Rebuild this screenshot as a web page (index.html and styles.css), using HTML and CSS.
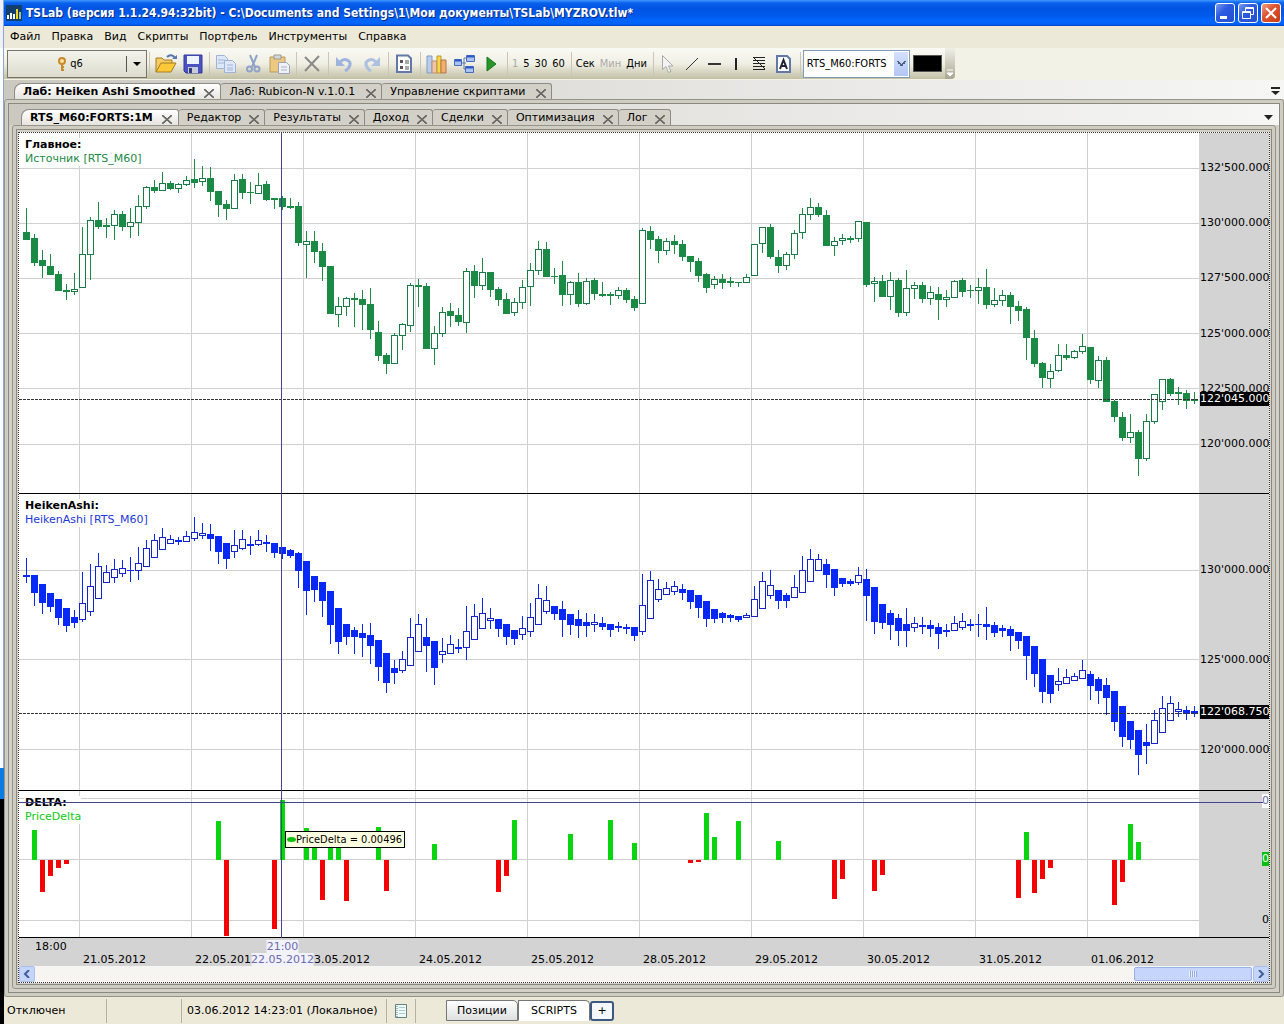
FILE: index.html
```html
<!DOCTYPE html>
<html lang="ru">
<head>
<meta charset="utf-8">
<title>TSLab</title>
<link rel="stylesheet" href="styles.css">
</head>
<body>
<div class="desktop-edge"></div>
<div class="window">
  <header class="titlebar">
    <svg class="app-icon" width="16" height="16" viewBox="0 0 16 16"><rect width="16" height="16" fill="#123f6b"/><path d="M1 10h2v4H1zM4 8h2v6H4zM7 9h2v5H7z" fill="#fff"/><path d="M10 4h2v10h-2z" fill="#f2d21c"/><path d="M13 7h2v7h-2z" fill="#9cc6a0"/></svg>
    <h1 class="caption">TSLab (версия 1.1.24.94:32bit) - C:\Documents and Settings\1\Мои документы\TSLab\MYZROV.tlw*</h1>
    <div class="window-buttons">
      <button class="wbtn" aria-label="Свернуть"><svg width="18" height="18"><rect x="4" y="12" width="7" height="3" fill="#fff"/></svg></button>
      <button class="wbtn" aria-label="Восстановить"><svg width="18" height="18" fill="none" stroke="#fff"><path d="M6.500 7V3.500h8v7H12M6 4.500h9"/><path d="M3.500 7.500h8v7h-8zM3 8.500h9"/></svg></button>
      <button class="wbtn close" aria-label="Закрыть"><svg width="18" height="18"><path d="M4 4l10 10M14 4L4 14" stroke="#fff" stroke-width="2"/></svg></button>
    </div>
  </header>
  <nav class="menubar">
    <button>Файл</button><button>Правка</button><button>Вид</button><button>Скрипты</button><button>Портфель</button><button>Инструменты</button><button>Справка</button>
  </nav>
  <div class="toolbar-area">
    <div class="toolbar">
      <button class="split"><span class="split-main"><svg width="10" height="16" viewBox="0 0 10 16"><circle cx="5" cy="5" r="3" fill="#fbe3a0" stroke="#c98a2c" stroke-width="2"/><path d="M5 8v7M5 11h2M5 14h2" stroke="#c98a2c" stroke-width="2"/></svg>q6</span><span class="split-arrow"></span></button>
      <span class="group">
        <button aria-label="Открыть"><svg width="24" height="22" viewBox="0 0 24 22"><path d="M2 19V5h6l2 2h8v4" fill="#f3cd63" stroke="#a67b1d"/><path d="M2 19l5-9h15l-5 9z" fill="#fbc938" stroke="#a67b1d"/><path d="M13 4c3-3 6-2 8 1" fill="none" stroke="#5877b0" stroke-width="2"/><path d="M18 6h5V2z" fill="#5877b0"/></svg></button>
        <button aria-label="Сохранить"><svg width="24" height="22" viewBox="0 0 24 22"><path d="M3 2h18v18H5l-2-2z" fill="#4b52c4" stroke="#333a96"/><path d="M6 3h12v8H6z" fill="#eef3fc"/><path d="M7 14h10v6H7z" fill="#c8cbd8"/><path d="M8 15h3v5H8z" fill="#333a80"/></svg></button>
      </span>
      <span class="group">
        <button aria-label="Копировать"><svg width="24" height="22" viewBox="0 0 24 22" fill="#dde7f8" stroke="#9fb3d9"><path d="M2.500 2.500h8l3 3v10h-11zM4 7h7M4 10h7"/><path d="M10.500 7.500h8l3 3v9h-11zM13 12h6M13 15h6M13 17h6"/></svg></button>
        <button aria-label="Вырезать"><svg width="24" height="22" viewBox="0 0 24 22" fill="none" stroke="#8fa3c8" stroke-width="2"><path d="M9 2l5 12M16 2l-5 12"/><circle cx="8.500" cy="16" r="2.500"/><circle cx="16" cy="16" r="2.500"/></svg></button>
        <button aria-label="Вставить"><svg width="24" height="22" viewBox="0 0 24 22"><path d="M2 4h15v15H2z" fill="#ecc97f" stroke="#b59b62"/><path d="M6 2h7v4H6z" fill="#d6d6d6" stroke="#999"/><path d="M10.500 9.500h8l3 3v8h-11z" fill="#eef1f8" stroke="#9ba4b8"/><path d="M13 14h6M13 17h6" stroke="#aab3c6"/></svg></button>
      </span>
      <span class="group solo"><button aria-label="Удалить"><svg width="22" height="22" viewBox="0 0 22 22"><path d="M4 4l14 14M18 3L4 18" stroke="#8a8a8a" stroke-width="2"/></svg></button></span>
      <span class="group">
        <button aria-label="Отменить"><svg width="24" height="22" viewBox="0 0 24 22"><path d="M7 9c5-5 11-1 10 3-1 3-3 5-5 6" fill="none" stroke="#9fb4dc" stroke-width="3"/><path d="M3 4v9h9z" fill="#9fb4dc"/></svg></button>
        <button aria-label="Повторить"><svg width="24" height="22" viewBox="0 0 24 22"><path d="M16 9C11 4 5 8 6 12c1 3 3 5 5 6" fill="none" stroke="#aebfdf" stroke-width="3"/><path d="M20 4v9h-9z" fill="#aebfdf"/></svg></button>
      </span>
      <span class="group solo"><button aria-label="Свойства"><svg width="22" height="22" viewBox="0 0 22 22"><path d="M4 2.500h11l3 3V19H4z" fill="#fff" stroke="#6079a8" stroke-width="2"/><path d="M7 7h3v3H7zM7 13h3v3H7z" fill="#555"/><path d="M12 8h4M12 10h4M12 14h4M12 16h4" stroke="#555"/></svg></button></span>
      <span class="group">
        <button aria-label="График"><svg width="24" height="22" viewBox="0 0 24 22" stroke-width="1"><path d="M2 3h5v17H2z" fill="#b9cdec" stroke="#8299c2"/><path d="M7 8h5v12H7z" fill="#f0c4a8" stroke="#b98d72"/><path d="M12 3h4v17h-4z" fill="#f7d74d" stroke="#bd982b"/><path d="M16 7h5v13h-5z" fill="#f2b06c" stroke="#b1764a"/></svg></button>
        <button aria-label="Схема"><svg width="24" height="22" viewBox="0 0 24 22"><path d="M9 10h5M12 5v11M12 5h3M12 16h3" stroke="#5d78b5" fill="none"/><g fill="#a9c4f3" stroke="#4a6cc0"><path d="M2.500 6.500h7v6h-7zM14.500 2.500h8v6h-8zM13.500 13.500h8v6h-8z"/></g><path d="M3 7.500h6M15 3.500h7M14 14.500h7" stroke="#3157c4" stroke-width="2"/></svg></button>
        <button aria-label="Запуск"><svg width="24" height="22" viewBox="0 0 24 22"><path d="M8 4l9 7-9 7z" fill="#27962a" stroke="#17761a"/></svg></button>
      </span>
      <span class="group words"><button disabled>1</button><button>5</button><button>30</button><button>60</button></span>
      <span class="group words"><button>Сек</button><button disabled>Мин</button><button>Дни</button></span>
      <span class="group tools">
        <button aria-label="Курсор"><svg width="23" height="22" viewBox="0 0 23 22"><path d="M5.500 2.500v14l3.500-3 2.500 6 2.500-1-2.500-5.500h4.500z" fill="#f3f3f3" stroke="#aaa"/></svg></button>
        <button aria-label="Линия"><svg width="23" height="22"><path d="M6 17L18 5" stroke="#333"/></svg></button>
        <button aria-label="Горизонталь"><svg width="23" height="22"><path d="M5 11h13" stroke="#333" stroke-width="2"/></svg></button>
        <button aria-label="Вертикаль"><svg width="23" height="22"><path d="M10 5v12" stroke="#222" stroke-width="2"/></svg></button>
        <button aria-label="Фибоначчи"><svg width="23" height="22"><path d="M4 4.500h12M4 7.500h12M4 10.500h12M4 13.500h12M4 16.500h12M5 5l11 11" stroke="#222"/></svg></button>
        <button aria-label="Текст"><svg width="23" height="22"><path d="M5 3h10l3 3v13H5z" fill="#fff" stroke="#6079a8" stroke-width="2"/><path d="M8 16l3.500-9L15 16M9 13h5" fill="none" stroke="#223" stroke-width="2"/></svg></button>
      </span>
      <span class="group last">
        <select class="instrument" aria-label="Инструмент"><option>RTS_M60:FORTS</option></select>
        <button class="swatch" aria-label="Цвет"></button>
      </span>
      <button class="overflow" aria-label="Ещё"><svg width="8" height="8"><path d="M1 1h6M1 4h6l-3 3z" stroke="#fff" fill="#fff"/></svg></button>
    </div>
  </div>

  <main class="workspace">
    <div class="tabstrip outer">
      <button class="tab active">Лаб: Heiken Ashi Smoothed<i class="x"></i></button><button class="tab">Лаб: Rubicon-N v.1.0.1<i class="x"></i></button><button class="tab">Управление скриптами<i class="x"></i></button>
      <button class="strip-menu" aria-label="Список вкладок"><svg width="9" height="8"><path d="M0 1h9" stroke="#222" stroke-width="2"/><path d="M0 4h9L4.500 8z" fill="#222"/></svg></button>
    </div>
    <div class="frame"><div class="frame-in">
      <div class="tabstrip inner">
        <button class="tab active">RTS_M60:FORTS:1M<i class="x"></i></button><button class="tab">Редактор<i class="x"></i></button><button class="tab">Результаты<i class="x"></i></button><button class="tab">Доход<i class="x"></i></button><button class="tab">Сделки<i class="x"></i></button><button class="tab">Оптимизация<i class="x"></i></button><button class="tab">Лог<i class="x"></i></button>
        <button class="strip-menu" aria-label="Список окон"><svg width="9" height="8"><path d="M0 2h9L4.500 7z" fill="#222"/></svg></button>
      </div>
      <div class="frame nested"><div class="frame-in">
        <div class="chart">
          <section class="pane price">
            <svg class="plot" id="source" viewBox="19 133 1180 360" preserveAspectRatio="none"></svg>
            <div class="scale" id="source-scale"></div>
            <div class="legend"><b>Главное:</b><span class="green">Источник [RTS_M60]</span></div>
          </section>
          <section class="pane heiken">
            <svg class="plot" id="heiken" viewBox="19 494 1180 296" preserveAspectRatio="none"></svg>
            <div class="scale" id="heiken-scale"></div>
            <div class="legend"><b>HeikenAshi:</b><span class="blue">HeikenAshi [RTS_M60]</span></div>
          </section>
          <section class="pane delta">
            <svg class="plot" id="delta" viewBox="19 791 1180 146" preserveAspectRatio="none"></svg>
            <div class="scale narrow" id="delta-scale"></div>
            <div class="legend"><b>DELTA:</b><span class="lime">PriceDelta</span></div>
            <div class="cross-h"></div>
            <div class="tip"><i></i>PriceDelta = 0.00496</div>
          </section>
          <div class="cross-v"></div>
          <div class="timeline">
            <div class="hours">18:00</div>
            <div class="days"><span>21.05.2012</span><span>22.05.2012</span><span>23.05.2012</span><span>24.05.2012</span><span>25.05.2012</span><span>28.05.2012</span><span>29.05.2012</span><span>30.05.2012</span><span>31.05.2012</span><span>01.06.2012</span></div>
            <div class="cursor-time"><span>21:00</span><span>22.05.2012</span></div>
          </div>
          <div class="scrollbar">
            <button aria-label="Влево"><svg width="8" height="8"><path d="M6 0L2 4l4 4" fill="none" stroke="#3f5f96" stroke-width="2"/></svg></button>
            <div class="track"><div class="thumb"></div></div>
            <button aria-label="Вправо"><svg width="8" height="8"><path d="M2 0l4 4-4 4" fill="none" stroke="#3f5f96" stroke-width="2"/></svg></button>
          </div>
        </div>
      </div></div>
    </div></div>
  </main>

  <footer class="status">
    <span class="cell state">Отключен</span><span class="cell blank"></span><span class="cell clock">03.06.2012 14:23:01 (Локальное)</span>
    <span class="cell note"><svg width="14" height="16"><path d="M1.500 1.500h11v13h-11z" fill="#eefaf8" stroke="#698080"/><path d="M3 1v14" stroke="#517c80" stroke-dasharray="1 1"/><path d="M5 4.500h6M5 7.500h6M5 10.500h6" stroke="#a9ccd0"/></svg></span>
    <div class="sheets"><button>Позиции</button><button class="current">SCRIPTS</button><button class="add">+</button></div>
  </footer>
</div>
<script src="chart.js"></script>
</body>
</html>
```
FILE: styles.css
```css
* { box-sizing: border-box; }
body {
  margin: 0;
  height: 100vh;
  min-height: 700px;
  display: grid;
  grid-template-columns: 4px minmax(0, 1fr);
  font: 11px/14px "DejaVu Sans", Verdana, sans-serif;
  color: #000;
  overflow: hidden;
}
button { font: inherit; color: inherit; border: 0; padding: 0; margin: 0; background: none; }
svg { display: block; flex: none; }
.desktop-edge {
  background: linear-gradient(90deg, transparent 3px, #8ba9d4 3px) top / 100% 75% no-repeat,
    linear-gradient(#f1eff6 0 48px, #fdfdfd 48px 75%, #0a7be0 75% 78%, #000 78%);
}
.window { display: flex; flex-direction: column; min-width: 0; background: #ece9d8; }

/* Title bar */
.titlebar {
  flex: none;
  height: 26px;
  display: flex;
  align-items: center;
  gap: 4px;
  padding: 0 3px 0 2px;
  background: linear-gradient(#3f98ff 0, #0a62ec 3px, #0054e3 8px, #0157e8 14px, #0066ff 21px, #0062f8 24px, #0044c4 26px);
}
.caption {
  flex: 1;
  margin: 0;
  font: bold 12px/20px "DejaVu Sans Condensed", "Trebuchet MS", sans-serif;
  color: #fff;
  text-shadow: 1px 1px 0 #0a2a80;
  white-space: nowrap;
}
.window-buttons { display: flex; gap: 3px; }
.wbtn {
  width: 20px;
  height: 20px;
  border: 1px solid #fff;
  border-radius: 3px;
  background: linear-gradient(135deg, #7b9cf0, #2c5be0 40%, #2350cf);
}
.wbtn.close { background: linear-gradient(135deg, #f0a48c, #de5530 40%, #c63d18); }

.menubar { flex: none; height: 22px; display: flex; align-items: center; gap: 11px; padding-left: 6px; }

/* Toolbar */
.toolbar-area { flex: none; height: 32px; background: #f2f2e6; display: flex; }
.toolbar {
  display: flex;
  align-items: center;
  height: 31px;
  padding-left: 3px;
  border-radius: 0 0 4px 0;
  background: linear-gradient(#fafaf5, #f0efe4 50%, #c2c0a4);
}
.split {
  width: 140px;
  height: 28px;
  display: flex;
  align-items: center;
  border: 1px solid #77756a;
  background: linear-gradient(#f4f3ec, #dddcce);
  font-family: "DejaVu Sans Condensed", sans-serif;
}
.split-main { flex: 1; display: flex; gap: 3px; align-items: center; justify-content: center; padding-left: 6px; }
.split-arrow { width: 20px; height: 16px; border-left: 1px solid #555; display: grid; place-items: center; }
.split-arrow::before { content: ""; border: 4px solid transparent; border-top-color: #000; border-bottom: 0; }
.group { display: flex; align-items: center; height: 24px; gap: 3px; padding: 0 2px 0 4px; border-left: 1px solid #c9c6b6; margin-left: 2px; }
.solo { padding: 0 3px 0 4px; }
.words { font-family: "DejaVu Sans Condensed", sans-serif; padding: 0 4px; gap: 5px; }
.words button:disabled { color: #aaa; }
.tools { gap: 0; padding: 0 5px 0 3px; }
.last { padding: 0 0 0 2px; gap: 3px; margin: 0; }
.instrument {
  appearance: none;
  width: 107px;
  height: 28px;
  border: 1px solid #7f9db9;
  border-radius: 0;
  padding: 0 0 0 3px;
  color: #000;
  font: 11px/14px "DejaVu Sans Condensed", sans-serif;
  background:
    linear-gradient(45deg, transparent 40%, #4d6185 40% 65%, transparent 65%) right 7px center / 5px 5px no-repeat,
    linear-gradient(-45deg, transparent 40%, #4d6185 40% 65%, transparent 65%) right 3px center / 5px 5px no-repeat,
    linear-gradient(#d5e0fc, #b3c6f3) right 1px center / 14px 24px no-repeat, #fff;
}
.swatch { width: 29px; height: 17px; background: #000; border: 1px solid #555; }
.overflow { align-self: stretch; display: grid; align-items: end; width: 10px; margin-left: 3px; padding: 0 1px 2px; background: linear-gradient(#f0efe8, #aaa893); border-radius: 0 0 4px 0; }

/* Tab strips */
.workspace { flex: 1; min-height: 0; display: flex; flex-direction: column; background: #d4d0c8; }
.tabstrip { flex: none; display: flex; align-items: end; background: linear-gradient(90deg, #cbc8c0, #e6e5e2 55%, #f6f6f5); white-space: nowrap; }
.tabstrip.outer { height: 19px; padding-left: 10px; }
.tabstrip.inner { height: 21px; padding-left: 12px; margin: 0 -3px; }
.tab {
  display: flex;
  align-items: center;
  gap: 8px;
  height: 16px;
  padding: 0 5px 0 8px;
  border: solid #8e8b84;
  border-width: 1px 1px 0 0;
  border-radius: 3px 3px 0 0;
  background: #d3d0c7;
}
.outer .tab { gap: 11px; }
.tab.active { gap: 9px; padding-right: 6px; font-weight: bold; background: linear-gradient(#fff, #e6e4df); border-left-width: 1px; border-top-left-radius: 8px; }
.x { width: 10px; height: 9px; margin-top: 3px; background:
    linear-gradient(42deg, transparent 41%, #6c6a66 46% 54%, transparent 59%),
    linear-gradient(-42deg, transparent 41%, #6c6a66 46% 54%, transparent 59%); }
.strip-menu { margin-left: auto; padding: 0 4px 4px; }
.inner .strip-menu { padding-right: 6px; }

/* Nested frames */
.frame { flex: 1; min-height: 0; display: flex; flex-direction: column; border: 1px solid #96938b; border-radius: 3px; padding: 3px; background: #cfccc2; }
.frame-in { flex: 1; min-height: 0; display: flex; flex-direction: column; border: 1px solid #8b8880; padding: 0 3px 3px; background: #d4d0c8; }
.nested > .frame-in { padding: 2px 1px 1px; }

/* Chart */
.chart { position: relative; flex: 1; min-height: 0; display: flex; flex-direction: column; border: 1px dotted #333; background: #fff; }
.pane { position: relative; flex: 1 1 0; min-height: 0; display: grid; grid-template: minmax(0, 1fr) / minmax(0, 1fr) 70px; box-sizing: content-box; border-bottom: 1px solid #000; }
.price { flex-grow: 360; }
.heiken { flex-grow: 296; }
.delta { flex-grow: 146; }
.plot { width: 100%; height: 100%; shape-rendering: crispEdges; }
.grid { fill: #d0d0d0; }
.last-price { stroke: #333; stroke-dasharray: 3 1; }
.candle-green { fill: #1a8a45; stroke: none; }
.candle-blue { fill: #0828f8; stroke: none; }
.hollow { fill: #fff; }
#source .hollow { stroke: #1a7a45; }
#heiken .hollow { stroke: #1424c8; }
.up { fill: #0ad60f; }
.down { fill: #f20505; }
.scale { position: relative; overflow: hidden; background: #d3d3d3; }
.scale span { position: absolute; left: 1px; line-height: 14px; margin-top: -7px; white-space: nowrap; }
.narrow span { left: 63px; }
.scale .now { background: #000; color: #fff; }
.scale .zero { background: #0ac00f; color: #fff; }
.scale .probe { background: #fff; color: #6b6bb0; }
.legend { position: absolute; left: 5px; top: 5px; display: flex; flex-direction: column; padding-left: 1px; background: #fff; }
.green { color: #1a8a45; }
.blue { color: #1c38d8; }
.lime { color: #0fc814; }
.cross-h { position: absolute; left: 0; right: 6px; top: 11px; height: 1px; background: #44448f; }
.cross-v { position: absolute; left: calc(21% - 1px); top: 0; bottom: 44px; width: 1px; background: #44448f; }
.tip {
  position: absolute;
  left: 266px;
  top: 40px;
  height: 17px;
  display: flex;
  align-items: center;
  padding: 0 2px 0 1px;
  border: 1px solid #000;
  background: #ffffe1;
  font-family: "DejaVu Sans Condensed", sans-serif;
  white-space: nowrap;
  z-index: 1;
}
.tip i { width: 9px; height: 5px; border-radius: 50%; background: #0ac00f; }
.timeline { position: relative; flex: none; height: 28px; background: #d3d3d3; padding-top: 2px; line-height: 13px; }
.hours { padding-left: 16px; }
.days { display: grid; grid-template-columns: repeat(10, 112fr) 66fr; padding-left: 64px; }
.cursor-time { position: absolute; left: calc(21% + 1px); top: 2px; transform: translateX(-50%); display: flex; flex-direction: column; align-items: center; color: #6b6bb0; }
.cursor-time span { background: #f2f2fb; }
.scrollbar { flex: none; height: 16px; display: flex; background: #f6f5f1; }
.scrollbar button { width: 16px; display: grid; place-items: center; border: 1px solid #a9c0f0; border-radius: 2px; background: #c4d4fb; }
.track { flex: 1; display: flex; justify-content: flex-end; padding: 1px 1px 1px 0; }
.thumb { width: 118px; border: 1px solid #9ab2e8; border-radius: 2px; background: repeating-linear-gradient(90deg, #eaf0ff 0 1px, #94abdf 1px 2px) center / 8px 6px no-repeat, #c6d5fb; }

/* Status bar */
.status { flex: none; height: 27px; display: flex; align-items: center; padding-left: 3px; white-space: nowrap; }
.cell { height: 24px; display: flex; align-items: center; border-right: 1px solid #b5b2a2; }
.state { width: 100px; }
.blank { width: 75px; }
.clock { width: 205px; padding-left: 5px; }
.note { width: 29px; padding-left: 7px; }
.sheets { display: flex; align-items: center; margin-left: 30px; }
.sheets button { width: 72px; height: 21px; border: 1px solid #777; border-radius: 0 5px 0 0; background: linear-gradient(#fff, #dedfe0); }
.sheets .current { background: #fff; border-bottom-color: #fff; }
.sheets .add { width: 24px; height: 20px; border: 2px solid #3c5a80; border-radius: 3px; background: #f4f7fb; }
```
FILE: chart.js
```js
// Each candle: high, body top, body bottom, low; a trailing "o" marks a rising (hollow) one.
const SOURCE = `208 232 240 240|234 238 263 266|250 260 266 278|254 266 275 275|271 274 291 291|284 290 292 300|273 289 292 295 o|227 254 288 288 o|217 220 255 280 o|202 220 227 229|218 225 227 238|210 214 226 240 o|211 214 227 231|208 222 227 238 o|195 206 223 236 o|186 187 207 209 o|180 187 191 193|172 183 191 191 o|181 183 189 190|183 184 189 193 o|176 180 185 186 o|159 179 183 188|166 178 182 186 o|167 178 192 201|191 191 205 217|200 204 209 220|174 180 209 209 o|174 179 193 199|182 192 193 204|173 185 194 194 o|181 184 200 201|198 198 200 209|196 198 207 210|198 206 208 209|202 206 243 246|231 241 245 278 o|231 241 252 263|243 251 267 281|266 266 314 314|297 306 315 327 o|297 298 307 316 o|293 298 300 327|290 299 305 330|288 304 330 339|321 332 356 361|353 355 364 374|333 335 364 364 o|323 324 336 350 o|283 285 326 332 o|279 285 287 307|283 286 349 349|326 333 349 365 o|307 312 334 337 o|303 311 316 327|308 315 322 326|268 271 323 333 o|265 271 286 298|258 272 286 290 o|272 272 290 297|287 289 300 306|293 299 314 314|298 302 313 316 o|280 287 303 309 o|263 270 287 306 o|241 249 271 275 o|242 249 277 277|268 276 277 284|261 275 295 306|281 282 295 305 o|273 282 304 307|278 281 304 305 o|278 280 294 300|282 294 296 297|292 294 296 305|287 290 296 299 o|288 290 300 303|296 299 308 311|228 230 304 304 o|226 231 240 249|236 239 251 263|238 241 251 255 o|235 241 245 254|240 244 257 261|256 256 262 272|258 261 276 282|273 274 288 293|276 279 285 289 o|274 279 283 289|277 281 283 287|282 282 283 287|274 277 283 283 o|244 244 276 276 o|227 227 244 253 o|224 227 257 259|250 257 266 273|252 254 266 270 o|230 233 255 259 o|208 214 233 239 o|198 207 215 220 o|203 207 215 217|210 215 246 246|237 241 246 256 o|234 238 241 245 o|236 238 240 243|221 221 239 242 o|222 222 285 287|277 281 284 302 o|275 281 297 297|272 280 297 310 o|278 280 313 317|270 288 313 316 o|282 285 289 299 o|282 285 299 303|286 292 299 305 o|287 294 300 320|290 297 300 307 o|280 281 298 298 o|278 280 292 297|285 290 291 298|278 287 291 304 o|269 287 305 309|288 300 305 307 o|290 295 301 306 o|292 295 307 324|301 306 311 321|307 309 338 360|330 338 364 367|362 363 378 388|364 371 379 388 o|344 355 371 372 o|344 355 358 360|350 351 358 359 o|334 346 352 354 o|347 347 380 384|356 360 381 388 o|357 360 402 402|400 401 417 422|412 417 438 441|414 432 438 443 o|430 432 459 476|414 421 459 461 o|394 394 422 424 o|379 379 402 410 o|378 379 394 396|387 392 394 405|390 393 401 409|392 399 401 404`;
const HEIKEN = `558 575 577 583|575 575 593 606|584 584 603 614|593 593 607 612|599 599 618 625|608 608 626 632|610 617 623 628|572 603 620 622 o|564 586 612 616 o|553 566 599 599 o|565 572 583 583 o|559 569 578 583 o|560 568 574 577 o|557 570 571 582|547 563 571 580 o|540 548 567 567 o|534 540 558 558 o|528 537 550 550 o|535 539 544 544 o|537 540 542 545|531 536 542 542 o|517 532 539 541 o|523 533 536 539 o|524 534 539 551|536 536 552 564|543 543 559 569|530 545 552 558 o|530 539 549 550 o|536 544 546 555|530 540 545 546 o|535 542 544 552|543 543 553 558|547 547 554 559|549 550 556 558|552 553 571 588|561 561 591 615|576 576 590 602|582 582 601 617|591 591 625 644|608 608 642 654|624 624 637 645|627 630 637 654|624 633 638 657|623 635 646 664|640 640 667 681|653 653 683 693|660 668 673 684|651 659 671 673 o|618 637 666 666 o|614 624 652 652 o|618 637 646 672|641 641 668 685|638 651 655 663 o|635 644 654 654 o|639 647 649 653|606 631 648 660 o|604 616 640 640 o|598 613 629 629 o|608 618 621 629 o|619 619 629 637|624 624 637 645|630 630 639 645|616 628 635 640 o|603 617 632 637 o|584 598 625 625 o|586 600 612 614 o|606 606 614 620|601 609 620 637|614 614 625 635|610 619 626 638|613 622 626 637|614 622 625 632 o|617 623 627 630|624 624 630 637|622 626 628 632|624 627 629 634|627 627 636 641|574 605 632 635 o|571 580 619 619 o|579 589 600 602 o|582 588 595 595 o|581 586 592 595 o|584 589 593 600|590 590 602 609|595 595 608 618|601 601 619 627|609 609 619 623|612 613 618 623|614 615 618 622|616 616 620 622|613 615 618 618 o|586 599 617 617 o|572 581 609 609 o|570 585 596 599 o|590 590 601 609|593 595 601 608|575 587 598 598 o|556 570 593 593 o|549 559 582 582 o|554 559 571 571 o|559 564 575 588|569 569 588 596|578 578 584 587|579 581 584 586|567 575 583 585 o|569 579 596 621|587 587 622 634|604 604 623 629|610 613 625 640|614 618 631 646|608 624 631 647|617 623 628 632 o|617 625 627 634|620 625 629 637|623 627 634 649|624 630 632 637|616 623 631 631 o|613 621 628 630 o|619 624 626 631|614 624 625 637|607 624 627 640|622 625 633 637|625 628 631 637|626 629 636 651|632 632 641 649|636 636 656 680|646 646 674 687|659 659 692 703|675 675 694 703|668 681 685 691 o|669 677 684 684 o|673 676 681 681 o|660 670 679 679 o|671 674 686 700|677 679 691 704|678 685 698 715|691 691 722 731|706 706 737 747|721 721 740 749|730 730 755 775|724 742 746 764|710 720 744 744 o|696 708 733 733 o|696 703 721 721 o|702 709 712 717 o|706 710 714 720|706 711 714 717`;

// Histogram bars: candle index and the far end of the bar.
const DELTA = [[1,830],[2,892],[3,876],[4,868],[5,864],[24,821],[25,936],[31,929],[32,800],[35,828],[36,840],[37,900],[38,840],[39,840],[40,901],[44,827],[45,891],[51,844],[59,892],[60,876],[61,820],[68,834],[73,820],[76,843],[83,863],[84,862],[85,813],[86,837],[89,821],[94,841],[101,899],[102,879],[106,891],[107,875],[124,898],[125,832],[126,893],[127,879],[128,868],[136,905],[137,882],[138,824],[139,842]];

const NS = "http://www.w3.org/2000/svg";
const STEP = 8;
const FIRST = 26;
const ZERO = 860;

function add(svg, name, cls, attrs) {
  const el = document.createElementNS(NS, name);
  el.setAttribute("class", cls);
  for (const key in attrs) el.setAttribute(key, attrs[key]);
  svg.appendChild(el);
}
function rect(svg, cls, x, y, width, height) {
  add(svg, "rect", cls, { x, y, width, height });
}
function grid(svg, top, height, levels) {
  for (let k = 0; k < 10; k++) rect(svg, "grid", 79 + k * 112, top, 1, height);
  levels.forEach(y => rect(svg, "grid", 19, y, 1180, 1));
}
function candles(svg, data, cls) {
  data.split("|").forEach((row, i) => {
    const p = row.split(" ");
    const [high, top, bottom, low] = p.map(Number);
    const x = FIRST + i * STEP;
    rect(svg, cls, x, high, 1, Math.max(low - high, 1));
    if (p[4]) {
      add(svg, "rect", "hollow", { x: x - 2.5, y: top + 0.5, width: 6, height: Math.max(bottom - top - 1, 1) });
    } else {
      rect(svg, cls, x - 3, top, 7, Math.max(bottom - top, 1));
    }
  });
}
function labels(id, top, height, rows) {
  const box = document.getElementById(id);
  rows.forEach(([y, text, cls]) => {
    const el = document.createElement("span");
    el.textContent = text;
    if (cls) el.className = cls;
    el.style.top = ((y - top) / height * 100) + "%";
    box.appendChild(el);
  });
}

const source = document.getElementById("source");
grid(source, 133, 360, [168, 223, 278, 333, 388, 444]);
candles(source, SOURCE, "candle-green");
add(source, "line", "last-price", { x1: 19, x2: 1199, y1: 399.5, y2: 399.5 });
labels("source-scale", 133, 360, [[168, "132'500.000"], [223, "130'000.000"], [278, "127'500.000"], [334, "125'000.000"], [389, "122'500.000"], [444, "120'000.000"], [399, "122'045.000", "now"]]);

const heiken = document.getElementById("heiken");
grid(heiken, 494, 296, [570, 659, 749]);
candles(heiken, HEIKEN, "candle-blue");
add(heiken, "line", "last-price", { x1: 19, x2: 1199, y1: 713.5, y2: 713.5 });
labels("heiken-scale", 494, 296, [[570, "130'000.000"], [660, "125'000.000"], [750, "120'000.000"], [712, "122'068.750", "now"]]);

const delta = document.getElementById("delta");
grid(delta, 791, 146, [798, 859, 920]);
DELTA.forEach(([i, y]) => {
  const x = FIRST + i * STEP - 2;
  if (i >= 83 && i <= 84 || y >= ZERO) rect(delta, "down", x, ZERO, 5, y - ZERO);
  else rect(delta, "up", x, y, 5, ZERO - y);
});
labels("delta-scale", 791, 146, [[801, "0", "probe"], [859, "0", "zero"], [920, "0"]]);
```
